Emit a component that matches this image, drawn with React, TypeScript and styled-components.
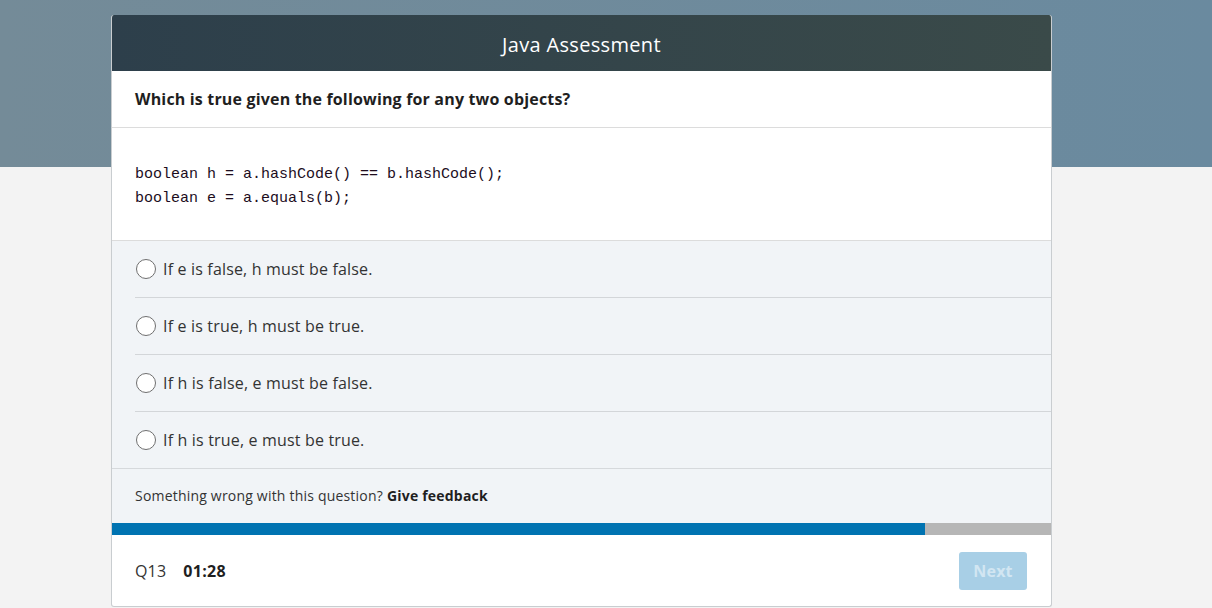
import React from "react";
import styled, { createGlobalStyle } from "styled-components";

const Global = createGlobalStyle`
  html, body { margin: 0; padding: 0; }
  body {
    background: linear-gradient(to right, #748b98, #6a8a9f) 0 0 / 100% 167px no-repeat, #f3f3f3;
    font-family: "Open Sans", "Noto Sans", sans-serif;
    color: #222;
    min-height: 608px;
    letter-spacing: 0.17px;
  }
`;

const Page = styled.div`
  padding-top: 15px;
`;

const Card = styled.div`
  margin-left: 111px;
  width: 941px;
  box-sizing: border-box;
  border: 1px solid #c9cdd0;
  border-top: none;
  border-radius: 3px;
  background: #fff;
  overflow: hidden;
`;

const Header = styled.div`
  height: 56px;
  display: flex;
  align-items: center;
  justify-content: center;
  background: linear-gradient(to right, #2d3f4b, #3a4a49);
  color: #fff;
  font-size: 20px;
  letter-spacing: 0.33px;
  padding-top: 2px;
  box-sizing: border-box;
`;

const Question = styled.div`
  height: 56px;
  display: flex;
  align-items: center;
  padding: 0 23px;
  font-size: 16px;
  font-weight: 700;
  color: #1f1f1f;
  border-bottom: 1px solid #dcdcdc;
`;

const Code = styled.pre`
  margin: 0;
  height: 113px;
  box-sizing: border-box;
  padding: 35px 23px 0;
  font-family: "Liberation Mono", "DejaVu Sans Mono", monospace;
  font-size: 15px;
  line-height: 24px;
  letter-spacing: 0;
  color: #1d0d1d;
  border-bottom: 1px solid #dcdcdc;
`;

const Answers = styled.div`
  background: #f1f4f7;
  padding-left: 23px;
  border-bottom: 1px solid #d6d9dc;
`;

const Answer = styled.label<{ $last?: boolean }>`
  height: 56px;
  display: flex;
  align-items: center;
  gap: 7px;
  font-size: 16px;
  color: #333;
  border-bottom: ${(p) => (p.$last ? "none" : "1px solid #d3d6d9")};
  cursor: pointer;
`;

const Radio = styled.span`
  width: 20px;
  height: 20px;
  box-sizing: border-box;
  border: 1.5px solid #6f6f6f;
  border-radius: 50%;
  background: #fff;
  margin-left: 1px;
`;

const Feedback = styled.div`
  height: 54px;
  display: flex;
  align-items: center;
  padding: 0 23px 2px;
  box-sizing: border-box;
  background: #f1f4f7;
  font-size: 14px;
  letter-spacing: 0.2px;
  color: #333;
  b { color: #1f1f1f; margin-left: 4px; }
`;

const Progress = styled.div`
  height: 12px;
  background: #b6b6b6;
`;

const Fill = styled.div`
  height: 100%;
  background: #0073b1;
`;

const Footer = styled.div`
  height: 71px;
  display: flex;
  align-items: center;
  padding: 0 24px 0 23px;
  font-size: 16px;
  color: #333;
`;

const Timer = styled.span`
  font-weight: 700;
  color: #1f1f1f;
  margin-left: 17px;
  letter-spacing: 0.3px;
`;

const Next = styled.button`
  margin-left: auto;
  width: 68px;
  height: 38px;
  border: none;
  border-radius: 3px;
  background: #a8cfe6;
  color: #d2e6f2;
  font-family: inherit;
  font-size: 16px;
  font-weight: 700;
  letter-spacing: 0.17px;
`;

const answers = [
  "If e is false, h must be false.",
  "If e is true, h must be true.",
  "If h is false, e must be false.",
  "If h is true, e must be true.",
];

export default function App() {
  return (
    <Page>
      <Global />
      <Card>
        <Header>Java Assessment</Header>
        <Question>Which is true given the following for any two objects?</Question>
        <Code>{"boolean h = a.hashCode() == b.hashCode();\nboolean e = a.equals(b);"}</Code>
        <Answers>
          {answers.map((a, i) => (
            <Answer key={a} $last={i === answers.length - 1}>
              <Radio />
              {a}
            </Answer>
          ))}
        </Answers>
        <Feedback>
          Something wrong with this question? <b>Give feedback</b>
        </Feedback>
        <Progress>
          <Fill style={{ width: `${(814 / 940) * 100}%` }} />
        </Progress>
        <Footer>
          Q13 <Timer>01:28</Timer>
          <Next disabled>Next</Next>
        </Footer>
      </Card>
    </Page>
  );
}
